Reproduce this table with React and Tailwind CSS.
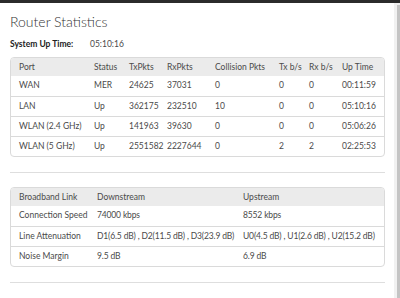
const ports = [
  ['WAN', 'MER', '24625', '37031', '0', '0', '0', '00:11:59'],
  ['LAN', 'Up', '362175', '232510', '10', '0', '0', '05:10:16'],
  ['WLAN (2.4 GHz)', 'Up', '141963', '39630', '0', '0', '0', '05:06:26'],
  ['WLAN (5 GHz)', 'Up', '2551582', '2227644', '0', '2', '2', '02:25:53'],
];

const portCols = ['w-[75px]', 'w-[35px]', 'w-[38px]', 'w-[48px]', 'w-[64px]', 'w-[30px]', 'w-[33px]', 'w-[50px]'];
const portHeads = ['Port', 'Status', 'TxPkts', 'RxPkts', 'Collision Pkts', 'Tx b/s', 'Rx b/s', 'Up Time'];

const link = [
  ['Connection Speed', '74000 kbps', '8552 kbps'],
  ['Line Attenuation', 'D1(6.5 dB) , D2(11.5 dB) , D3(23.9 dB)', 'U0(4.5 dB) , U1(2.6 dB) , U2(15.2 dB)'],
  ['Noise Margin', '9.5 dB', '6.9 dB'],
];
const linkCols = ['w-[78px]', 'w-[146px]', 'w-[149px]'];

export default function App() {
  return (
    <div className="h-[298px] w-[400px] overflow-hidden bg-white text-[#4a4a4a] font-['Lato',sans-serif]">
      <div className="h-[3px] bg-[#2b2b2b]" />
      <div className="flex h-[295px]">
        <div className="flex-1 pl-[10px] pr-[9px]">
          <h1 className="mt-[10px] text-[14px] font-light leading-[18px] text-[#333]">Router Statistics</h1>
          <div className="mt-[7px] flex text-[8.5px] leading-[12px]">
            <span className="w-[80px] font-bold text-[#222]">System Up Time:</span>
            <span>05:10:16</span>
          </div>

          <div className="mt-[7px] overflow-hidden rounded-[4px] border border-[#dadada]">
            <table className="w-full table-fixed border-collapse text-[8.5px]">
              <thead>
                <tr className="h-[18px] bg-[#ebebeb]">
                  {portHeads.map((h, i) => (
                    <th key={h} className={`${portCols[i]} whitespace-nowrap pl-[8px] text-left font-normal`}>{h}</th>
                  ))}
                </tr>
              </thead>
              <tbody>
                {ports.map((r, j) => (
                  <tr key={r[0]} className={`h-[20px] ${j > 0 ? 'border-t border-[#dadada]' : ''}`}>
                    {r.map((c, i) => (
                      <td key={i} className="whitespace-nowrap pl-[8px]">{c}</td>
                    ))}
                  </tr>
                ))}
              </tbody>
            </table>
          </div>

          <hr className="mt-[15px] border-t border-[#dedede]" />

          <div className="mt-[14px] overflow-hidden rounded-[4px] border border-[#dadada]">
            <table className="w-full table-fixed border-collapse text-[8.5px]">
              <thead>
                <tr className="h-[18px] bg-[#ebebeb]">
                  {['Broadband Link', 'Downstream', 'Upstream'].map((h, i) => (
                    <th key={h} className={`${linkCols[i]} whitespace-nowrap pl-[8px] text-left font-normal`}>{h}</th>
                  ))}
                </tr>
              </thead>
              <tbody>
                {link.map((r, j) => (
                  <tr key={r[0]} className={`h-[20px] ${j > 0 ? 'border-t border-[#dadada]' : ''}`}>
                    {r.map((c, i) => (
                      <td key={i} className={`whitespace-nowrap pl-[8px] ${i > 0 ? 'tracking-[-0.15px]' : ''}`}>{c}</td>
                    ))}
                  </tr>
                ))}
              </tbody>
            </table>
          </div>

          <hr className="mt-[15px] border-t border-[#dedede]" />
        </div>
        <div className="flex w-[7px] bg-[#f1f1f1] pt-[2px]">
          <div className="ml-[3px] w-[4px] bg-[#c4c4c4]" />
        </div>
      </div>
    </div>
  );
}
